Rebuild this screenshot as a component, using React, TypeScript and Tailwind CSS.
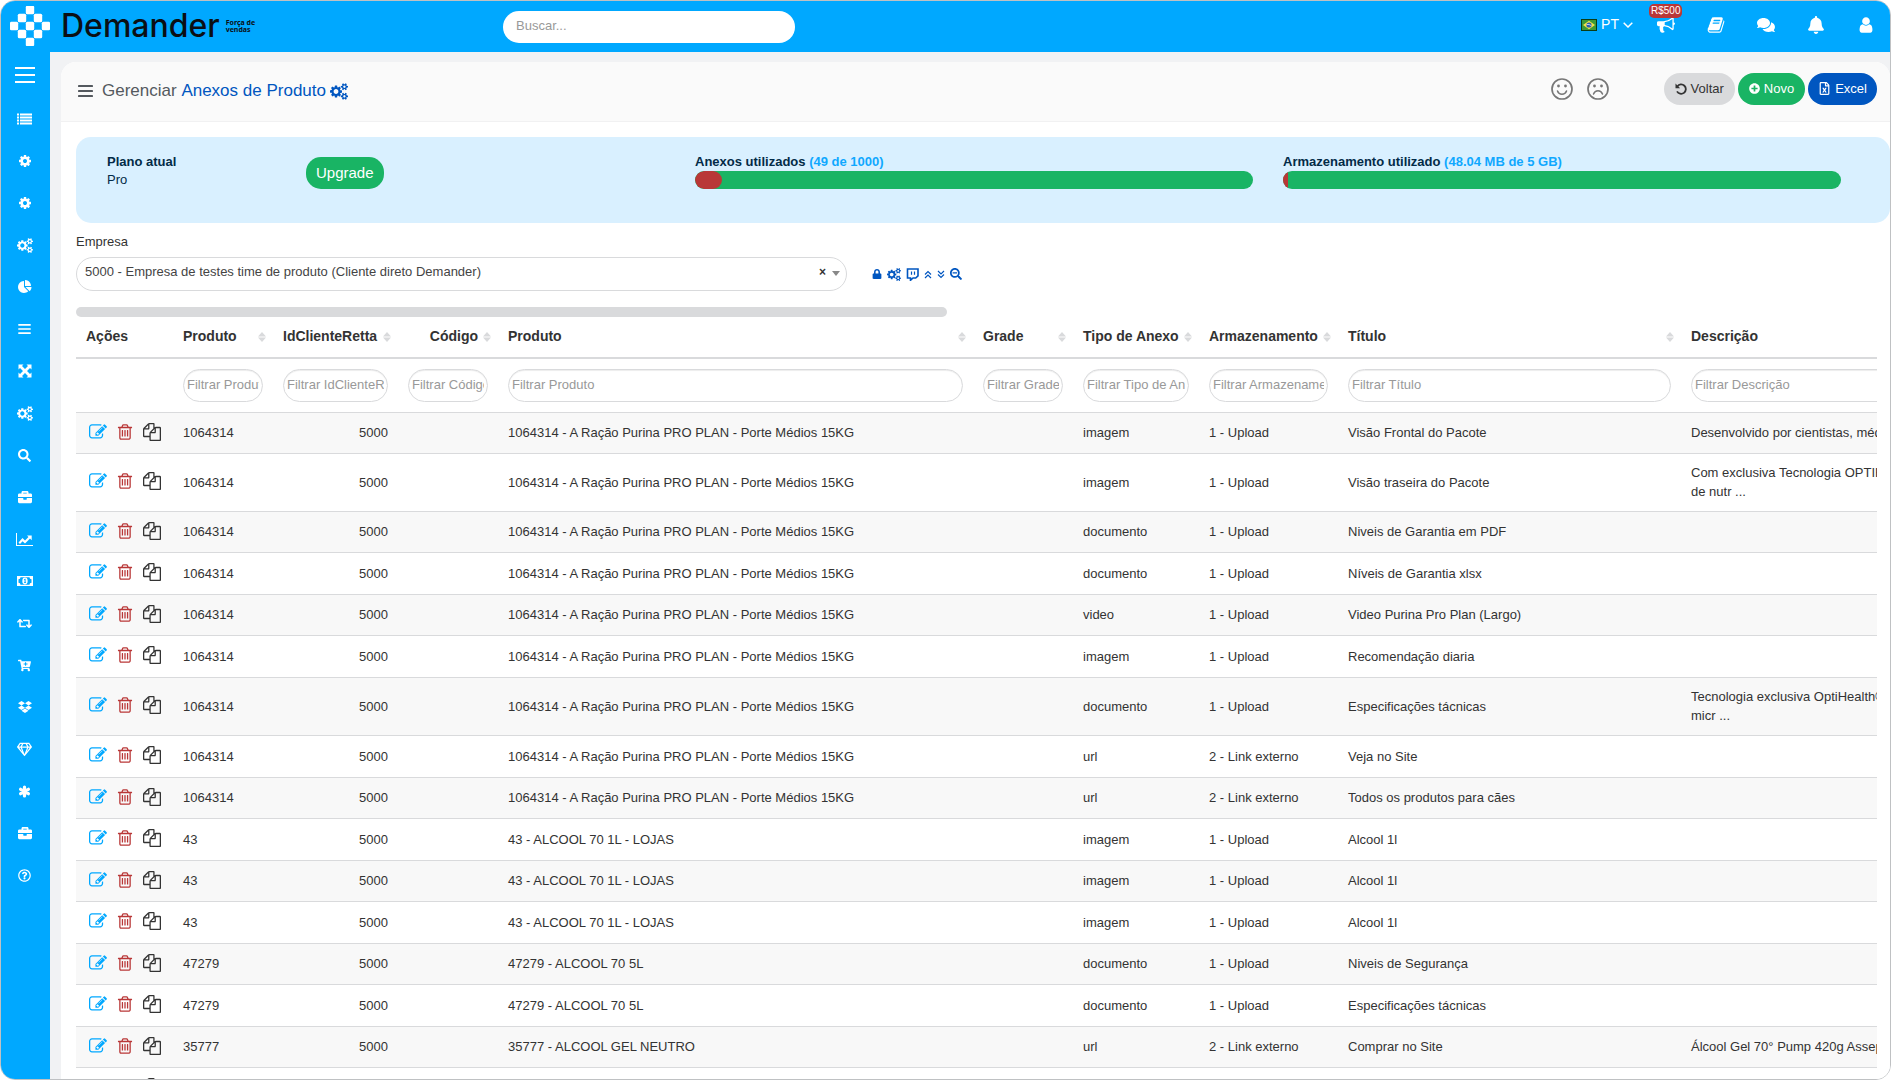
import React from 'react';
import {
  FaBell,
  FaBriefcase,
  FaCartPlus,
  FaComments,
  FaDropbox,
  FaLock,
  FaPlusCircle,
  FaRegFileExcel,
  FaRegGem,
  FaRegQuestionCircle,
  FaRetweet,
  FaSearch,
  FaSearchMinus,
} from 'react-icons/fa';

type IconProps = { className?: string };

const Glyph: React.FC<IconProps & { d: string; box?: string }> = ({ d, className, box = '0 0 1792 1792' }) => (
  <svg viewBox={box} fill="currentColor" className={className} aria-hidden="true">
    <path d={d} />
  </svg>
);

const Cog: React.FC<IconProps> = ({ className }) => (
  <Glyph
    className={className}
    d="M1152 896q0-106-75-181t-181-75-181 75-75 181 75 181 181 75 181-75 75-181zm512-109v222q0 12-8 23t-20 13l-185 28q-19 54-39 91 35 50 107 138 10 12 10 25t-9 23q-27 37-99 108t-94 71q-12 0-26-9l-138-108q-44 23-91 38-16 136-29 186-7 28-36 28h-222q-14 0-24.5-8.5t-11.5-21.5l-28-184q-49-16-90-37l-141 107q-10 9-25 9-14 0-25-11-126-114-165-168-7-10-7-23 0-12 8-23 15-21 51-66.5t54-70.5q-27-50-41-99l-183-27q-13-2-21-12.5t-8-23.5v-222q0-12 8-23t19-13l186-28q14-46 39-92-40-57-107-138-10-12-10-24 0-10 9-23 26-36 98.5-107.5t94.5-71.5q13 0 26 10l138 107q44-23 91-38 16-136 29-186 7-28 36-28h222q14 0 24.5 8.5t11.5 21.5l28 184q49 16 90 37l142-107q9-9 24-9 13 0 25 10 129 119 165 170 7 8 7 22 0 12-8 23-15 21-51 66.5t-54 70.5q26 50 41 98l183 28q13 2 21 12.5t8 23.5z"
  />
);

const Cogs: React.FC<IconProps> = ({ className }) => (
  <Glyph
    className={className}
    box="0 0 1920 1792"
    d="M896 896q0-106-75-181t-181-75-181 75-75 181 75 181 181 75 181-75 75-181zm768 512q0-52-38-90t-90-38-90 38-38 90q0 53 37.5 90.5t90.5 37.5 90.5-37.5 37.5-90.5zm0-1024q0-52-38-90t-90-38-90 38-38 90q0 53 37.5 90.5t90.5 37.5 90.5-37.5 37.5-90.5zm-384 421v185q0 10-7 19.5t-16 10.5l-155 24q-11 35-32 76 34 48 90 115 7 11 7 20 0 12-7 19-23 30-82.5 89.5t-78.5 59.5q-11 0-21-7l-115-90q-37 19-77 31-11 108-23 155-7 24-30 24h-186q-11 0-20-7.5t-10-17.5l-23-153q-34-10-75-31l-118 89q-7 7-20 7-11 0-21-8-144-133-144-160 0-9 7-19 10-14 41-53t47-61q-23-44-35-82l-152-24q-10-1-17-9.5t-7-19.5v-185q0-10 7-19.5t16-10.5l155-24q11-35 32-76-34-48-90-115-7-11-7-20 0-12 7-20 22-30 82-89t79-59q11 0 21 7l115 90q34-18 77-32 11-108 23-154 7-24 30-24h186q11 0 20 7.5t10 17.5l23 153q34 10 75 31l118-89q8-7 20-7 11 0 21 8 144 133 144 160 0 8-7 19-12 16-42 54t-45 60q23 48 34 82l152 23q10 2 17 10.5t7 19.5zm640 533v140q0 16-149 31-12 27-30 52 51 113 51 138 0 4-4 7-122 71-124 71-8 0-46-47t-52-68q-20 2-30 2t-30-2q-14 21-52 68t-46 47q-2 0-124-71-4-3-4-7 0-25 51-138-18-25-30-52-149-15-149-31v-140q0-16 149-31 13-29 30-52-51-113-51-138 0-4 4-7 4-2 35-20t59-34 30-16q8 0 46 46.5t52 67.5q20-2 30-2t30 2q51-71 92-112l6-2q4 0 124 70 4 3 4 7 0 25-51 138 17 23 30 52 149 15 149 31zm0-1024v140q0 16-149 31-12 27-30 52 51 113 51 138 0 4-4 7-122 71-124 71-8 0-46-47t-52-68q-20 2-30 2t-30-2q-14 21-52 68t-46 47q-2 0-124-71-4-3-4-7 0-25 51-138-18-25-30-52-149-15-149-31v-140q0-16 149-31 13-29 30-52-51-113-51-138 0-4 4-7 4-2 35-20t59-34 30-16q8 0 46 46.5t52 67.5q20-2 30-2t30 2q51-71 92-112l6-2q4 0 124 70 4 3 4 7 0 25-51 138 17 23 30 52 149 15 149 31z"
  />
);

const Pencil: React.FC<IconProps> = ({ className }) => (
  <Glyph
    className={className}
    d="M888 1184l116-116-152-152-116 116v56h96v96h56zm440-720q-16-16-33 1l-350 350q-17 17-1 33t33-1l350-350q17-17 1-33zm80 594v190q0 119-84.5 203.5t-203.5 84.5h-832q-119 0-203.5-84.5t-84.5-203.5v-832q0-119 84.5-203.5t203.5-84.5h832q63 0 117 25 15 7 18 23 3 17-9 29l-49 49q-14 14-32 8-23-6-45-6h-832q-66 0-113 47t-47 113v832q0 66 47 113t113 47h832q66 0 113-47t47-113v-126q0-13 9-22l64-64q15-15 35-7t20 29zm-96-738l288 288-672 672h-288v-288zm444 132l-92 92-288-288 92-92q28-28 68-28t68 28l152 152q28 28 28 68t-28 68z"
  />
);

const Trash: React.FC<IconProps> = ({ className }) => (
  <Glyph
    className={className}
    d="M704 736v576q0 14-9 23t-23 9h-64q-14 0-23-9t-9-23v-576q0-14 9-23t23-9h64q14 0 23 9t9 23zm256 0v576q0 14-9 23t-23 9h-64q-14 0-23-9t-9-23v-576q0-14 9-23t23-9h64q14 0 23 9t9 23zm256 0v576q0 14-9 23t-23 9h-64q-14 0-23-9t-9-23v-576q0-14 9-23t23-9h64q14 0 23 9t9 23zm128 724v-948h-896v948q0 22 7 40.5t14.5 27 10.5 8.5h832q3 0 10.5-8.5t14.5-27 7-40.5zm-672-1076h448l-48-117q-7-9-17-11h-317q-10 2-17 11zm928 32v64q0 14-9 23t-23 9h-96v948q0 83-47 143.5t-113 60.5h-832q-66 0-113-58.5t-47-141.5v-952h-96q-14 0-23-9t-9-23v-64q0-14 9-23t23-9h309l70-167q15-37 54-63t79-26h320q40 0 79 26t54 63l70 167h309q14 0 23 9t9 23z"
  />
);

const Files: React.FC<IconProps> = ({ className }) => (
  <Glyph
    className={className}
    d="M1696 384q40 0 68 28t28 68v1216q0 40-28 68t-68 28h-960q-40 0-68-28t-28-68v-288h-544q-40 0-68-28t-28-68v-672q0-40 20-88t48-76l408-408q28-28 76-48t88-20h416q40 0 68 28t28 68v328q68-40 128-40h416zm-544 213l-299 299h299v-299zm-640-384l-299 299h299v-299zm196 647l316-316v-416h-384v416q0 40-28 68t-68 28h-416v640h512v-256q0-40 20-88t48-76zm956 804v-1152h-384v416q0 40-28 68t-68 28h-416v640h896z"
  />
);

const Bullhorn: React.FC<IconProps> = ({ className }) => (
  <Glyph
    className={className}
    d="M1664 640q53 0 90.5 37.5t37.5 90.5-37.5 90.5-90.5 37.5v384q0 52-38 90t-90 38q-417-347-812-380-58 19-91 66t-31 100.5 40 92.5q-20 33-23 65.5t6 58 33.5 55 48 50 61.5 50.5q-29 58-111.5 83t-168.5 11.5-132-55.5q-7-23-29.5-87.5t-32-94.5-23-89-15-101 3.5-98.5 22-110.5h-122q-66 0-113-47t-47-113v-192q0-66 47-113t113-47h480q435 0 896-384 52 0 90 38t38 90v384zm-128 604v-954q-394 302-768 343v270q377 42 768 341z"
  />
);

const Book: React.FC<IconProps> = ({ className }) => (
  <Glyph
    className={className}
    d="M1703 478q40 57 18 129l-275 906q-19 64-76.5 107.5t-122.5 43.5h-923q-77 0-148.5-53.5t-99.5-131.5q-24-67-2-127 0-4 3-27t4-37q1-8-3-21.5t-3-19.5q2-11 8-21t16.5-23.5 16.5-23.5q23-38 45-91.5t30-91.5q3-10 .5-30t-.5-28q3-11 17-28t17-23q21-36 42-92t25-90q1-9-2.5-32t.5-28q4-13 22-30.5t22-22.5q19-26 42.5-84.5t27.5-96.5q1-8-3-25.5t-2-26.5q2-8 9-18t18-23 17-21q8-12 16.5-30.5t15-35 16-36 19.5-32 26.5-23.5 36-11.5 47.5 5.5l-1 3q38-9 51-9h761q74 0 114 56t18 130l-274 906q-36 119-71.5 153.5t-128.5 34.5h-869q-27 0-38 15-11 16-1 43 24 70 144 70h923q29 0 56-15.5t35-41.5l300-987q7-22 5-57 38 15 59 43zm-1064 2q-4 13 2 22.5t20 9.5h608q13 0 25.5-9.5t16.5-22.5l21-64q4-13-2-22.5t-20-9.5h-608q-13 0-25.5 9.5t-16.5 22.5zm-83 256q-4 13 2 22.5t20 9.5h608q13 0 25.5-9.5t16.5-22.5l21-64q4-13-2-22.5t-20-9.5h-608q-13 0-25.5 9.5t-16.5 22.5z"
  />
);

const User: React.FC<IconProps> = ({ className }) => (
  <Glyph
    className={className}
    d="M1536 1399q0 109-62.5 187t-150.5 78h-854q-88 0-150.5-78t-62.5-187q0-85 8.5-160.5t31.5-152 58.5-131 94-89 134.5-34.5q131 128 313 128t313-128q76 0 134.5 34.5t94 89 58.5 131 31.5 152 8.5 160.5zm-256-887q0 159-112.5 271.5t-271.5 112.5-271.5-112.5-112.5-271.5 112.5-271.5 271.5-112.5 271.5 112.5 112.5 271.5z"
  />
);

const Pie: React.FC<IconProps> = ({ className }) => (
  <Glyph
    className={className}
    d="M768 890l546 546q-106 108-247.5 168t-298.5 60q-209 0-385.5-103t-279.5-279.5-103-385.5 103-385.5 279.5-279.5 385.5-103v762zm187 6h773q0 157-60 298.5t-168 247.5zm709-128h-768v-768q209 0 385.5 103t279.5 279.5 103 385.5z"
  />
);

const Bars: React.FC<IconProps> = ({ className }) => (
  <svg viewBox="0 0 15 12" fill="currentColor" className={className} aria-hidden="true">
    <rect width="15" height="2" rx="0.4" />
    <rect y="5" width="15" height="2" rx="0.4" />
    <rect y="10" width="15" height="2" rx="0.4" />
  </svg>
);

const List: React.FC<IconProps> = ({ className }) => (
  <svg viewBox="0 0 15 12" fill="currentColor" className={className} aria-hidden="true">
    <path d="M0 .5h2v2H0zM3 .5h12v2H3zM0 3.5h2v2H0zM3 3.5h12v2H3zM0 6.5h2v2H0zM3 6.5h12v2H3zM0 9.5h2v2H0zM3 9.5h12v2H3z" />
  </svg>
);

const Arrows: React.FC<IconProps> = ({ className }) => (
  <svg viewBox="0 0 14 14" fill="currentColor" className={className} aria-hidden="true">
    <path d="M.5.5h5L4 2l3 3 3-3L8.5.5h5v5L12 4 9 7l3 3 1.5-1.5v5h-5L10 12 7 9l-3 3 1.5 1.5h-5v-5L2 10l3-3-3-3L.5 5.5z" />
  </svg>
);

const Asterisk: React.FC<IconProps> = ({ className }) => (
  <svg viewBox="0 0 13 13" stroke="currentColor" strokeWidth="3.2" strokeLinecap="round" className={className} aria-hidden="true">
    <path d="M6.5 2v9M2.6 4.3l7.800 4.400M10.400 4.300L2.600 8.700" />
  </svg>
);

const LineChart: React.FC<IconProps> = ({ className }) => (
  <svg viewBox="0 0 17 13" fill="currentColor" className={className} aria-hidden="true">
    <path d="M0 0h1v12h16v1H0z" />
    <path d="M2.5 9.5l4-4.5 2.5 2.5L12.5 4 11 2.5h4.7v4.7L14 5.6l-5 5-2.400-2.400L4 11z" />
  </svg>
);

const Money: React.FC<IconProps> = ({ className }) => (
  <svg viewBox="0 0 16 10" className={className} aria-hidden="true">
    <rect width="16" height="10" fill="currentColor" />
    <path d="M3.5 1.3h9a2 2 0 0 0 2 2v3.4a2 2 0 0 0-2 2h-9a2 2 0 0 0-2-2V3.3a2 2 0 0 0 2-2z" fill="#00a8ff" />
    <ellipse cx="8" cy="5" rx="2.7" ry="3.4" fill="currentColor" />
    <path d="M7 3.5l1-.7h.6v3.4H9v.8H7v-.8h.6V3.9L7 4.2z" fill="#00a8ff" />
  </svg>
);

const Undo: React.FC<IconProps> = ({ className }) => (
  <svg viewBox="0 0 12 12" className={className} aria-hidden="true">
    <path d="M2.3 3.4A4.7 4.7 0 1 1 2 8.4" fill="none" stroke="currentColor" strokeWidth="1.8" />
    <path d="M.5.6v4.6h4.6z" fill="currentColor" />
  </svg>
);

const Twitch: React.FC<IconProps> = ({ className }) => (
  <svg viewBox="0 0 13 13" fill="none" stroke="currentColor" strokeWidth="1.6" className={className} aria-hidden="true">
    <path d="M1.5 1H12v6.8L9.700 10H7l-2.500 2.300V10h-3z" />
    <path d="M5.5 3.5v3.2M8.5 3.5v3.2" strokeWidth="1.2" />
  </svg>
);

const Chevrons: React.FC<{ d: string }> = ({ d }) => (
  <svg viewBox="0 0 8 9" fill="none" stroke="currentColor" strokeWidth="1.2" className="h-[9px] w-2" aria-hidden="true">
    <path d={d} />
  </svg>
);

const Face: React.FC<{ mouth: string; label: string }> = ({ mouth, label }) => (
  <button type="button" aria-label={label} className="text-[#777]">
    <svg viewBox="0 0 22 22" fill="none" stroke="currentColor" className="size-[22px]" aria-hidden="true">
      <circle cx="11" cy="11" r="10" strokeWidth="1.7" />
      <circle cx="7.5" cy="8" r="1.4" fill="currentColor" stroke="none" />
      <circle cx="14.5" cy="8" r="1.4" fill="currentColor" stroke="none" />
      <path d={mouth} strokeWidth="1.5" strokeLinecap="round" />
    </svg>
  </button>
);

const Flag: React.FC = () => (
  <svg viewBox="0 0 16 12" className="h-3 w-4" aria-hidden="true">
    <rect width="16" height="12" fill="#0b3d14" />
    <rect x="1" y="1" width="14" height="10" fill="#3b9a3a" />
    <path d="M8 1.8L14 6l-6 4.2L2 6z" fill="#f2e04a" />
    <circle cx="8" cy="6" r="2.6" fill="#2a5fb0" />
    <path d="M5.6 5.5q2.6-.6 4.8 1.2" stroke="#fff" strokeWidth="0.7" fill="none" />
  </svg>
);

const LogoMark: React.FC = () => {
  const cells = [[2, 0], [1, 1], [3, 1], [0, 2], [2, 2], [4, 2], [1, 3], [3, 3], [2, 4]];
  return (
    <svg viewBox="0 0 40 40" fill="#fff" className="size-10" aria-hidden="true">
      {cells.map(([x, y]) => (
        <rect key={`${x}-${y}`} x={x * 8 - 0.2} y={y * 8 - 0.2} width="8.4" height="8.4" rx="1.5" />
      ))}
    </svg>
  );
};

const menu = [
  { label: 'Cadastros', icon: <List className="h-3 w-[15px]" /> },
  { label: 'Configurações', icon: <Cog className="size-[14px]" /> },
  { label: 'Parâmetros', icon: <Cog className="size-[14px]" /> },
  { label: 'Processos', icon: <Cogs className="h-[15px] w-4" /> },
  { label: 'Gráficos', icon: <Pie className="size-[14px]" /> },
  { label: 'Listas', icon: <Bars className="h-[10px] w-[13px]" /> },
  { label: 'Expandir', icon: <Arrows className="size-[14px]" /> },
  { label: 'Integrações', icon: <Cogs className="h-[15px] w-4" /> },
  { label: 'Consultas', icon: <FaSearch className="size-[13px]" /> },
  { label: 'Comercial', icon: <FaBriefcase className="size-[14px]" /> },
  { label: 'Indicadores', icon: <LineChart className="h-[13px] w-[17px]" /> },
  { label: 'Financeiro', icon: <Money className="h-[10px] w-4" /> },
  { label: 'Trocas', icon: <FaRetweet className="size-[15px]" /> },
  { label: 'Pedidos', icon: <FaCartPlus className="size-[13px]" /> },
  { label: 'Estoque', icon: <FaDropbox className="size-[14px]" /> },
  { label: 'Fidelidade', icon: <FaRegGem className="size-[15px]" /> },
  { label: 'Extras', icon: <Asterisk className="size-[13px]" /> },
  { label: 'Serviços', icon: <FaBriefcase className="size-[14px]" /> },
  { label: 'Ajuda', icon: <FaRegQuestionCircle className="size-[13px]" /> },
];

const columns = [
  { title: 'Produto', filter: 'Filtrar Produto', width: 'w-[100px]' },
  { title: 'IdClienteRetta', filter: 'Filtrar IdClienteRetta', width: 'w-[125px]' },
  { title: 'Código', filter: 'Filtrar Código', width: 'w-[100px]', right: true },
  { title: 'Produto', filter: 'Filtrar Produto', width: 'w-[475px]' },
  { title: 'Grade', filter: 'Filtrar Grade', width: 'w-[100px]' },
  { title: 'Tipo de Anexo', filter: 'Filtrar Tipo de Anexo', width: 'w-[126px]' },
  { title: 'Armazenamento', filter: 'Filtrar Armazenamento', width: 'w-[139px]' },
  { title: 'Título', filter: 'Filtrar Título', width: 'w-[343px]' },
  { title: 'Descrição', filter: 'Filtrar Descrição', width: 'w-[600px]' },
];

const racao = '1064314 - A Ração Purina PRO PLAN - Porte Médios 15KG';
const upload = '1 - Upload';
const externo = '2 - Link externo';

const rows = [
  { id: '1064314', produto: racao, tipo: 'imagem', local: upload, titulo: 'Visão Frontal do Pacote', descricao: ['Desenvolvido por cientistas, médicos veterinários e nutricionistas'] },
  { id: '1064314', produto: racao, tipo: 'imagem', local: upload, titulo: 'Visão traseira do Pacote', descricao: ['Com exclusiva Tecnologia OPTIHEALTH, combinação', 'de nutr ...'] },
  { id: '1064314', produto: racao, tipo: 'documento', local: upload, titulo: 'Niveis de Garantia em PDF', descricao: [] },
  { id: '1064314', produto: racao, tipo: 'documento', local: upload, titulo: 'Níveis de Garantia xlsx', descricao: [] },
  { id: '1064314', produto: racao, tipo: 'video', local: upload, titulo: 'Video Purina Pro Plan (Largo)', descricao: [] },
  { id: '1064314', produto: racao, tipo: 'imagem', local: upload, titulo: 'Recomendação diaria', descricao: [] },
  { id: '1064314', produto: racao, tipo: 'documento', local: upload, titulo: 'Especificações tácnicas', descricao: ['Tecnologia exclusiva OptiHealth® com nutrientes e', 'micr ...'] },
  { id: '1064314', produto: racao, tipo: 'url', local: externo, titulo: 'Veja no Site', descricao: [] },
  { id: '1064314', produto: racao, tipo: 'url', local: externo, titulo: 'Todos os produtos para cães', descricao: [] },
  { id: '43', produto: '43 - ALCOOL 70 1L - LOJAS', tipo: 'imagem', local: upload, titulo: 'Alcool 1l', descricao: [] },
  { id: '43', produto: '43 - ALCOOL 70 1L - LOJAS', tipo: 'imagem', local: upload, titulo: 'Alcool 1l', descricao: [] },
  { id: '43', produto: '43 - ALCOOL 70 1L - LOJAS', tipo: 'imagem', local: upload, titulo: 'Alcool 1l', descricao: [] },
  { id: '47279', produto: '47279 - ALCOOL 70 5L', tipo: 'documento', local: upload, titulo: 'Niveis de Segurança', descricao: [] },
  { id: '47279', produto: '47279 - ALCOOL 70 5L', tipo: 'documento', local: upload, titulo: 'Especificações tácnicas', descricao: [] },
  { id: '35777', produto: '35777 - ALCOOL GEL NEUTRO', tipo: 'url', local: externo, titulo: 'Comprar no Site', descricao: ['Álcool Gel 70° Pump 420g Asseptgel'] },
  { id: '35777', produto: '35777 - ALCOOL GEL NEUTRO', tipo: 'imagem', local: upload, titulo: 'Álcool Gel', descricao: [] },
];

const Header: React.FC = () => (
  <header className="flex h-[51px] shrink-0 items-center bg-[#00a8ff] pl-[9px] pr-[15px] text-white">
    <a href="/" className="flex w-[493px] shrink-0 items-center pb-px">
      <LogoMark />
      <span className="ml-[11px] font-[Inter] text-[32px] font-medium leading-10 text-[#0b0f14]">Demander</span>
      <span className="ml-[6px] w-9 font-['Noto_Sans'] text-[7px] font-bold leading-[7px] text-[#0b0f14]">Força de vendas</span>
    </a>
    <input
      type="search"
      aria-label="Buscar"
      placeholder="Buscar..."
      className="h-8 w-[292px] rounded-full bg-white px-[13px] pb-[2px] text-[13px] text-[#333] placeholder:text-[#999]"
    />
    <div className="ml-auto flex items-center pb-1">
      <button type="button" className="mr-6 flex items-center gap-1 text-[14px]">
        <Flag />
        PT
        <svg viewBox="0 0 10 6" className="h-[6px] w-[10px]" fill="none" stroke="currentColor" strokeWidth="1.5" aria-hidden="true">
          <path d="M.7.8L5 5 9.3.8" />
        </svg>
      </button>
      <nav className="flex items-center gap-8">
        <a href="/novidades" aria-label="Novidades" className="relative">
          <Bullhorn className="size-[18px]" />
          <span className="absolute -left-2 -top-3 h-[14px] rounded-[5px] bg-[#b93737] px-[2px] text-[10px] leading-[14px]">R$500</span>
        </a>
        <a href="/manual" aria-label="Manual"><Book className="size-[18px]" /></a>
        <a href="/chat" aria-label="Mensagens"><FaComments className="size-[18px]" /></a>
        <a href="/avisos" aria-label="Avisos"><FaBell className="size-[18px]" /></a>
        <a href="/perfil" aria-label="Perfil"><User className="size-[18px]" /></a>
      </nav>
    </div>
  </header>
);

const Sidebar: React.FC = () => (
  <aside className="flex w-[49px] shrink-0 flex-col items-center bg-[#00a8ff] pr-[2px] text-white">
    <button type="button" aria-label="Menu" className="flex h-[46px] w-5 flex-col justify-center gap-[5px]">
      <span className="h-[2px] w-5 bg-white" />
      <span className="h-[2px] w-5 bg-white" />
      <span className="h-[2px] w-5 bg-white" />
    </button>
    <nav className="flex flex-col">
      {menu.map((item) => (
        <a key={item.label} href="#" aria-label={item.label} className="flex h-[42px] w-8 items-center justify-center">
          {item.icon}
        </a>
      ))}
    </nav>
  </aside>
);

const Usage: React.FC<{ label: string; detail: string; percent: number; round?: boolean }> = ({ label, detail, percent, round }) => (
  <div className="col-span-4 px-[15px] pt-4 text-[13px] font-bold leading-[18px] text-[#032b47]">
    {label} <span className="text-[#0fa8ff]">{detail}</span>
    <div className="h-[18px] overflow-hidden rounded-[9px] bg-[#19b464]">
      <div className={round ? 'h-full rounded-[9px] bg-[#b93737]' : 'h-full bg-[#b93737]'} style={{ width: `${percent}%` }} />
    </div>
  </div>
);

const SortIcon: React.FC = () => (
  <svg viewBox="0 0 8 10" className="h-[10px] w-2 shrink-0 text-[#d9dadc]" fill="currentColor" aria-hidden="true">
    <path d="M4 0l4 4.400H0zM4 10l4-4.400H0z" />
  </svg>
);

const AttachmentsTable: React.FC = () => (
  <div className="overflow-hidden">
    <div className="h-[10px] w-[871px] rounded-full bg-[#d9dadc]" />
    <table className="w-[2205px] table-fixed border-collapse whitespace-nowrap text-left text-[13px] leading-[19px]">
      <thead>
        <tr className="h-[41px] border-b-2 border-[#d9dadc] text-[14px]">
          <th className="w-[97px] pb-px pl-[10px]">Ações</th>
          {columns.map((col, i) => (
            <th key={i} className={col.width}>
              <div className="flex items-center justify-between pb-px pl-[10px] pr-[7px]">
                <span className={col.right ? 'ml-auto mr-[5px]' : ''}>{col.title}</span>
                <SortIcon />
              </div>
            </th>
          ))}
        </tr>
        <tr className="h-[54px] border-b border-[#d9dadc]">
          <td />
          {columns.map((col, i) => (
            <td key={i} className="px-[10px]">
              <input
                type="text"
                aria-label={col.filter}
                placeholder={col.filter}
                className="block h-[33px] w-full rounded-full border border-[#d9dadc] bg-white pb-[2px] pl-[3px] pr-[3px] text-[13px] shadow-[inset_0_1px_1px_rgba(0,0,0,0.075)] placeholder:text-[#999]"
              />
            </td>
          ))}
        </tr>
      </thead>
      <tbody>
        {rows.map((row, i) => (
          <tr key={i} className="h-[41px] border-b border-[#d9dadc] odd:bg-[#f8f8f8] even:h-[42px]">
            <td>
              <div className="flex items-center gap-[9px] pb-[2px] pl-[13px]">
                <button type="button" aria-label="Editar" className="text-[#00a8ff]"><Pencil className="size-[18px]" /></button>
                <button type="button" aria-label="Excluir" className="text-[#b93737]"><Trash className="size-[18px]" /></button>
                <button type="button" aria-label="Copiar" className="text-[#333]"><Files className="size-[18px]" /></button>
              </div>
            </td>
            <td className="px-[10px]">{row.id}</td>
            <td className="px-[10px] text-right">5000</td>
            <td />
            <td className="px-[10px]">{row.produto}</td>
            <td />
            <td className="px-[10px]">{row.tipo}</td>
            <td className="px-[10px]">{row.local}</td>
            <td className="px-[10px]">{row.titulo}</td>
            <td className="px-[10px] pb-[10px] pt-[9px]">
              {row.descricao.map((line) => (
                <div key={line}>{line}</div>
              ))}
            </td>
          </tr>
        ))}
      </tbody>
    </table>
  </div>
);

const App: React.FC = () => {
  return (
    <div className="flex h-screen flex-col overflow-hidden rounded-[15px] border border-[#bfc1c3] bg-white font-['Liberation_Sans',Arial,sans-serif] text-[13px] text-[#333]">
      <Header />
      <div className="flex min-h-0 flex-1">
        <Sidebar />
        <main className="min-w-0 flex-1 overflow-hidden bg-[#f1f2f4] pl-[11px] pt-[10px]">
          <div className="min-h-full rounded-t-[15px] bg-white">
            {/* Page title */}
            <div className="flex h-[60px] items-center rounded-t-[15px] border-b border-[#f1f1f2] bg-[#fafafa] pb-[6px] pl-[17px] pr-[13px]">
              <h1 className="flex items-center pt-[5px] text-[17px] leading-6 text-[#54595e]">
                <Bars className="mr-[9px] h-3 w-[15px]" />
                Gerenciar&nbsp;
                <a href="#" className="flex items-center gap-1 text-[#0056c0]">
                  Anexos de Produto
                  <Cogs className="h-[17px] w-[18px]" />
                </a>
              </h1>
              <div className="ml-auto flex items-center gap-[14px]">
                <Face label="Satisfeito" mouth="M6.5 13q1.2 3.3 4.5 3.3t4.5-3.3" />
                <Face label="Insatisfeito" mouth="M6.5 16q1.2-3.3 4.5-3.3t4.5 3.3" />
              </div>
              <div className="ml-[55px] flex gap-[3px]">
                <button type="button" className="flex h-8 items-center gap-1 rounded-full bg-[#d9dadc] px-[11px] text-[#333]">
                  <Undo className="size-3" />
                  Voltar
                </button>
                <button type="button" className="flex h-8 items-center gap-1 rounded-full bg-[#19b464] px-[11px] text-white">
                  <FaPlusCircle className="size-[11px]" />
                  Novo
                </button>
                <button type="button" className="flex h-8 items-center gap-1 rounded-full bg-[#0056c0] px-[10px] text-white">
                  <FaRegFileExcel className="size-[13px]" />
                  Excel
                </button>
              </div>
            </div>

            {/* Plan usage */}
            <section className="ml-[15px] mt-[15px] grid h-[86px] grid-cols-12 rounded-[15px] bg-[#d9f0ff] pl-4 pr-[34px]">
              <div className="col-span-4 flex px-[15px] pt-4 leading-[18px] text-[#032b47]">
                <div className="w-[199px]">
                  <p className="font-bold">Plano atual</p>
                  <p>Pro</p>
                </div>
                <button type="button" className="mt-1 h-8 rounded-[15px] bg-[#19b464] px-[10px] text-[15px] text-white">Upgrade</button>
              </div>
              <Usage label="Anexos utilizados" detail="(49 de 1000)" percent={4.9} round />
              <Usage label="Armazenamento utilizado" detail="(48.04 MB de 5 GB)" percent={0.94} />
            </section>

            <div className="pl-[15px] pr-[13px]">
              <label htmlFor="empresa" className="block pb-[6px] pt-[10px] leading-[18px]">Empresa</label>
              <div className="mb-4 flex items-center">
                <div className="relative w-[771px]">
                  <select id="empresa" className="block h-[34px] w-full appearance-none rounded-full border border-[#d9dadc] bg-white pb-1 pl-2 text-[13px] text-[#444]">
                    <option>5000 - Empresa de testes time de produto (Cliente direto Demander)</option>
                  </select>
                  <button type="button" aria-label="Limpar" className="absolute right-[21px] top-[7px] text-[12px] font-bold leading-4">×</button>
                  <svg viewBox="0 0 8 5" className="pointer-events-none absolute right-[7px] top-[14px] h-[5px] w-2" fill="#888" aria-hidden="true">
                    <path d="M0 0h8L4 5z" />
                  </svg>
                </div>
                <div className="ml-[25px] flex items-center gap-[5px] text-[#0056c0]">
                  <button type="button" aria-label="Bloquear"><FaLock className="size-[10px]" /></button>
                  <button type="button" aria-label="Configurar"><Cogs className="h-[13px] w-[14px]" /></button>
                  <button type="button" aria-label="Comentários"><Twitch className="size-[13px]" /></button>
                  <button type="button" aria-label="Recolher"><Chevrons d="M1 4.5l3-3 3 3M1 8l3-3 3 3" /></button>
                  <button type="button" aria-label="Expandir"><Chevrons d="M1 1l3 3 3-3M1 4.5l3 3 3-3" /></button>
                  <button type="button" aria-label="Reduzir"><FaSearchMinus className="size-3" /></button>
                </div>
              </div>
              <AttachmentsTable />
            </div>
          </div>
        </main>
      </div>
    </div>
  );
};

export default App;
